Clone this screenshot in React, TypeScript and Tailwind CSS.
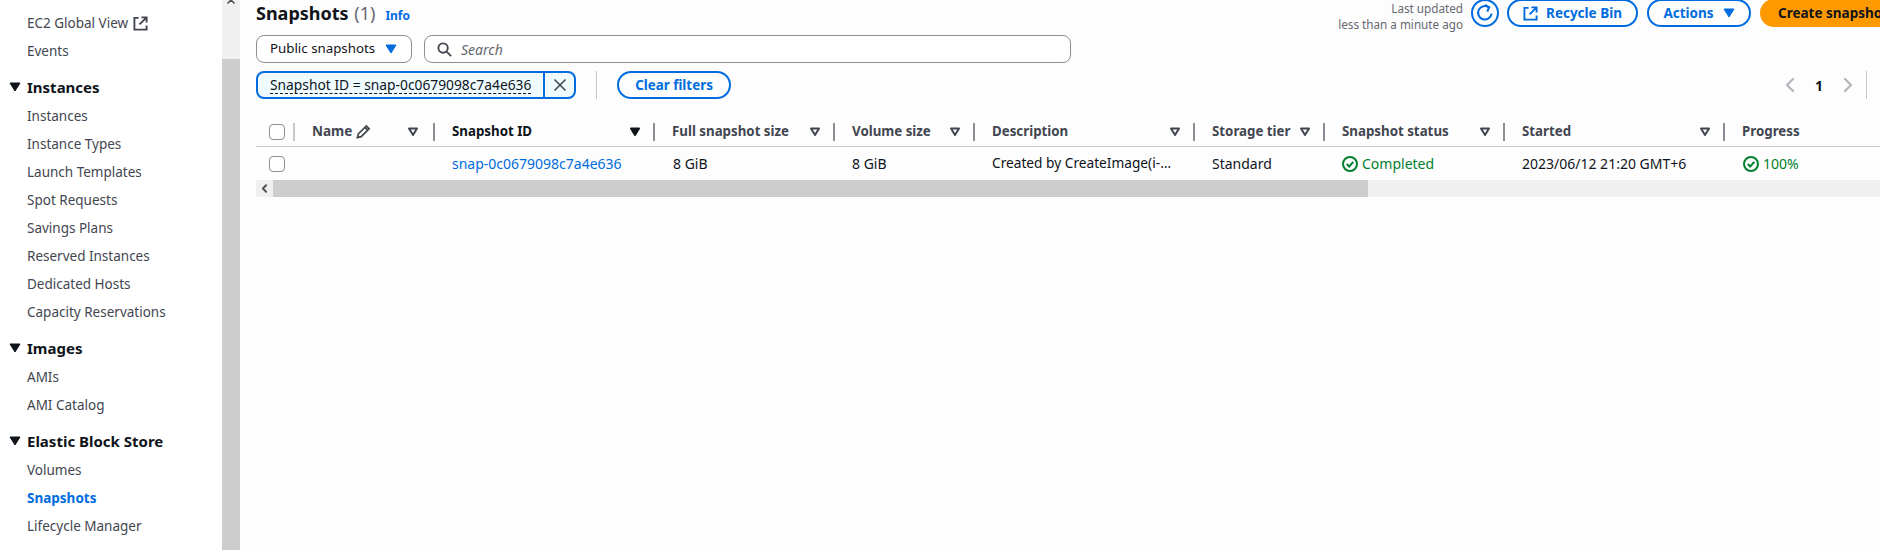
import { ChevronLeft, ChevronRight, X } from "lucide-react";

const FONT = "font-['Noto_Sans','Liberation_Sans',sans-serif]";

const navGroups = [
  {
    title: "Instances",
    items: [
      "Instances",
      "Instance Types",
      "Launch Templates",
      "Spot Requests",
      "Savings Plans",
      "Reserved Instances",
      "Dedicated Hosts",
      "Capacity Reservations",
    ],
  },
  { title: "Images", items: ["AMIs", "AMI Catalog"] },
  { title: "Elastic Block Store", items: ["Volumes", "Snapshots", "Lifecycle Manager"] },
];

const columns = [
  { label: "Snapshot ID", width: "w-[220px]", sorted: true },
  { label: "Full snapshot size", width: "w-[180px]" },
  { label: "Volume size", width: "w-[140px]" },
  { label: "Description", width: "w-[220px]" },
  { label: "Storage tier", width: "w-[130px]" },
  { label: "Snapshot status", width: "w-[180px]" },
  { label: "Started", width: "w-[220px]" },
];

const SortCaret = ({ solid }: { solid?: boolean }) => (
  <svg width="12" height="10" viewBox="0 0 12 10" className="shrink-0">
    <path
      d="M2 1.500h8L6 8z"
      fill={solid ? "#0f141a" : "none"}
      stroke={solid ? "#0f141a" : "#424650"}
      strokeWidth="2"
      strokeLinejoin="round"
    />
  </svg>
);

const NavCaret = () => (
  <svg width="12" height="10" viewBox="0 0 12 10" className="shrink-0">
    <path d="M1 1h10L6 9z" fill="#0f141a" stroke="#0f141a" strokeLinejoin="round" />
  </svg>
);

const CheckCircle = () => (
  <svg width="16" height="16" viewBox="0 0 16 16" fill="none" stroke="#00802f" strokeWidth="2" className="shrink-0">
    <circle cx="8" cy="8" r="7" />
    <path d="M4.800 8l2.400 2.500L11.300 5.800" />
  </svg>
);

const Checkbox = () => (
  <span className="block w-4 h-4 rounded-[4px] border border-[#8c8c94] bg-white" />
);

const ColumnHead = ({ label, width, sorted }: { label: string; width: string; sorted?: boolean }) => (
  <div className={`${width} shrink-0 flex items-center justify-between pl-[17px] pr-[12px] h-[18px] border-r-2 border-[#8c8c94]`}>
    <span className={sorted ? "text-[#0f141a]" : ""}>{label}</span>
    <SortCaret solid={sorted} />
  </div>
);

const Sidebar = () => (
  <aside className="w-[222px] shrink-0 bg-white text-[13.5px] text-[#424650] pl-[27px] pt-[9px]">
    <div className="h-[28px] flex items-center gap-[5px]">
      EC2 Global View
      <svg width="15" height="15" viewBox="0 0 16 16" fill="none" stroke="#424650" strokeWidth="2">
        <path d="M6 2H1.500v12.500h13V10M9 1.500h5.500V7M14.500 1.500L7 9" />
      </svg>
    </div>
    <div className="h-[28px] flex items-center">Events</div>
    {navGroups.map((group) => (
      <div key={group.title} className="mt-[8px]">
        <div className="h-[29px] flex items-center text-[15px] font-bold text-[#0f141a] relative">
          <span className="absolute left-[-18px] top-[9px]">
            <NavCaret />
          </span>
          {group.title}
        </div>
        {group.items.map((item) => (
          <div
            key={item}
            className={item === "Snapshots" ? "h-[28px] flex items-center text-[13.500px] font-bold text-[#006ce0]" : "h-[28px] flex items-center"}
          >
            {item}
          </div>
        ))}
      </div>
    ))}
  </aside>
);

const Toolbar = () => (
  <div className="flex justify-between h-[30px]">
    <div className="flex items-baseline">
      <h1 className="text-[18px] leading-[26px] font-bold text-[#0f141a]">
        Snapshots <span className="font-normal text-[#656871] ml-[1px]">(1)</span>
      </h1>
      <span className="ml-[10px] text-[12px] font-bold text-[#006ce0]">Info</span>
    </div>
    <div className="flex items-start w-[541px] shrink-0 text-[13.5px]">
      <div className="w-[124px] shrink-0 text-right whitespace-nowrap text-[11.700px] leading-[16px] text-[#656871] flex flex-col items-end">
        <div>Last updated</div>
        <div>less than a minute ago</div>
      </div>
      <button className="ml-[8px] -mt-[1px] w-[28px] h-[28px] shrink-0 rounded-full border-2 border-[#006ce0] flex items-center justify-center">
        <svg width="18" height="18" viewBox="0 0 16 16" fill="none" stroke="#006ce0" strokeWidth="1.800">
          <path d="M13.800 8.500A6 6 0 1 1 11.500 3" />
          <path d="M8 .8l3.700 2.300-1.700 3.700" />
        </svg>
      </button>
      <button className="ml-[8px] -mt-[1px] w-[131px] h-[28px] shrink-0 rounded-full border-2 border-[#006ce0] text-[#006ce0] font-bold flex items-center justify-center gap-[8px]">
        <svg width="15" height="15" viewBox="0 0 16 16" fill="none" stroke="#006ce0" strokeWidth="2">
          <path d="M6 2H1.500v12.500h13V10M9 1.500h5.500V7M14.500 1.500L7 9" />
        </svg>
        Recycle Bin
      </button>
      <button className="ml-[9px] -mt-[1px] w-[104px] h-[28px] shrink-0 rounded-full border-2 border-[#006ce0] text-[#006ce0] font-bold flex items-center justify-center gap-[9px]">
        Actions
        <svg width="12" height="10" viewBox="0 0 12 10">
          <path d="M1 1h10L6 9z" fill="#006ce0" stroke="#006ce0" strokeLinejoin="round" />
        </svg>
      </button>
      <button className="ml-[9px] -mt-[1px] w-[180px] h-[28px] shrink-0 rounded-full bg-[#ff9900] text-[#0f141a] font-bold whitespace-nowrap text-left pl-[18px]">
        Create snapshot
      </button>
    </div>
  </div>
);

const FilterBar = () => (
  <div className="flex flex-col gap-[8px]">
    <div className="flex gap-[12px]">
      <div className="w-[156px] h-[28px] rounded-[8px] border border-[#8c8c94] bg-white flex items-center pl-[13px] gap-[10px] text-[13.300px] text-[#0f141a]">
        Public snapshots
        <svg width="12" height="10" viewBox="0 0 12 10">
          <path d="M1 1h10L6 9z" fill="#006ce0" stroke="#006ce0" strokeLinejoin="round" />
        </svg>
      </div>
      <div className="w-[647px] h-[28px] rounded-[8px] border border-[#8c8c94] bg-white flex items-center pl-[12px] gap-[9px] italic text-[#656871]">
        <svg width="15" height="15" viewBox="0 0 16 16" fill="none" stroke="#424650" strokeWidth="2">
          <circle cx="6.500" cy="6.500" r="5" />
          <path d="M10.500 10.500L15 15" />
        </svg>
        Search
      </div>
    </div>
    <div className="flex items-center">
      <div className="w-[320px] h-[28px] rounded-[8px] border-2 border-[#006ce0] bg-[#f0fbff] flex">
        <div className="flex-1 flex items-center pl-[12px] border-r-2 border-[#006ce0] text-[#0f141a] text-[13.800px]">
          <span className="border-b border-dashed border-[#0f141a] leading-[16px] whitespace-nowrap">Snapshot ID = snap-0c0679098c7a4e636</span>
        </div>
        <div className="w-[29px] flex items-center justify-center">
          <X size={20} strokeWidth={2} color="#424650" />
        </div>
      </div>
      <div className="ml-[20px] w-px h-[28px] bg-[#c6c6cd]" />
      <button className="ml-[20px] w-[114px] h-[28px] rounded-full border-2 border-[#006ce0] text-[#006ce0] text-[13.400px] font-bold">
        Clear filters
      </button>
      <div className="ml-auto mr-[13px] flex items-center h-[28px] text-[#b4b4bb]">
        <ChevronLeft size={24} strokeWidth={2.200} />
        <span className="ml-[13px] font-bold text-[#0f141a]">1</span>
        <ChevronRight size={24} strokeWidth={2.200} className="ml-[13px]" />
        <div className="ml-[6px] w-px h-[28px] bg-[#c6c6cd]" />
      </div>
    </div>
  </div>
);

const SnapshotsTable = () => (
  <div className="mt-[19px] text-[#0f141a]">
    <div className="flex items-center h-[29px] border-b border-[#c6c6cd] text-[13.300px] font-bold text-[#424650]">
      <div className="w-[39px] shrink-0 pl-[13px] h-[18px] flex items-center border-r-2 border-[#c6c6cd]">
        <Checkbox />
      </div>
      <div className="w-[140px] shrink-0 pl-[17px] pr-[14px] h-[18px] flex items-center justify-between border-r-2 border-[#8c8c94]">
        <span className="flex items-center gap-[4px] text-[13.500px] -mt-[1px]">
          Name
          <svg width="15" height="15" viewBox="0 0 16 16" fill="none" stroke="#424650" strokeWidth="1.800">
            <path d="M1.500 14.500l1-4L11 2l3 3-8.500 8.500zM9.500 3.500l3 3" />
          </svg>
        </span>
        <SortCaret />
      </div>
      {columns.map((col) => (
        <ColumnHead key={col.label} {...col} />
      ))}
      <div className="pl-[17px] whitespace-nowrap">Progress</div>
    </div>
    <div className="flex items-center h-[33px]">
      <div className="w-[39px] shrink-0 pl-[13px]">
        <Checkbox />
      </div>
      <div className="w-[140px] shrink-0" />
      <div className="w-[220px] pl-[17px] shrink-0 text-[#006ce0]">snap-0c0679098c7a4e636</div>
      <div className="w-[180px] pl-[18px] shrink-0">8 GiB</div>
      <div className="w-[140px] pl-[17px] shrink-0">8 GiB</div>
      <div className="w-[220px] pl-[17px] shrink-0 text-[13.700px]">Created by CreateImage(i-…</div>
      <div className="w-[130px] pl-[17px] shrink-0">Standard</div>
      <div className="w-[180px] pl-[17px] shrink-0 flex items-center gap-[4px] text-[#00802f]">
        <CheckCircle />
        Completed
      </div>
      <div className="w-[220px] pl-[17px] shrink-0">2023/06/12 21:20 GMT+6</div>
      <div className="pl-[18px] flex items-center gap-[4px] text-[#00802f]">
        <CheckCircle />
        100%
      </div>
    </div>
    <div className="flex h-[17px] bg-[#f0f0f0]">
      <div className="w-[17px] shrink-0 flex items-center justify-center">
        <ChevronLeft size={13} strokeWidth={3.500} color="#505050" />
      </div>
      <div className="w-[1095px] shrink-0 bg-[#cdcdcd]" />
    </div>
  </div>
);

export default function App() {
  return (
    <div className={`${FONT} w-[1880px] h-[550px] overflow-hidden flex text-[14px] bg-[#fdfdfd]`}>
      <Sidebar />
      <div className="w-[18px] shrink-0 flex flex-col bg-[#f0f0f0]">
        <div className="h-[59px] shrink-0 overflow-hidden flex justify-center">
          <svg width="10" height="4" viewBox="0 0 10 4">
            <path d="M1.500 3.500L5 0l3.500 3.500" fill="none" stroke="#505050" strokeWidth="1.500" />
          </svg>
        </div>
        <div className="flex-1 bg-[#cdcdcd]" />
      </div>
      <main className="flex-1 min-w-0 pl-[16px] flex flex-col">
        <Toolbar />
        <div className="mt-[5px]">
          <FilterBar />
        </div>
        <SnapshotsTable />
      </main>
    </div>
  );
}
